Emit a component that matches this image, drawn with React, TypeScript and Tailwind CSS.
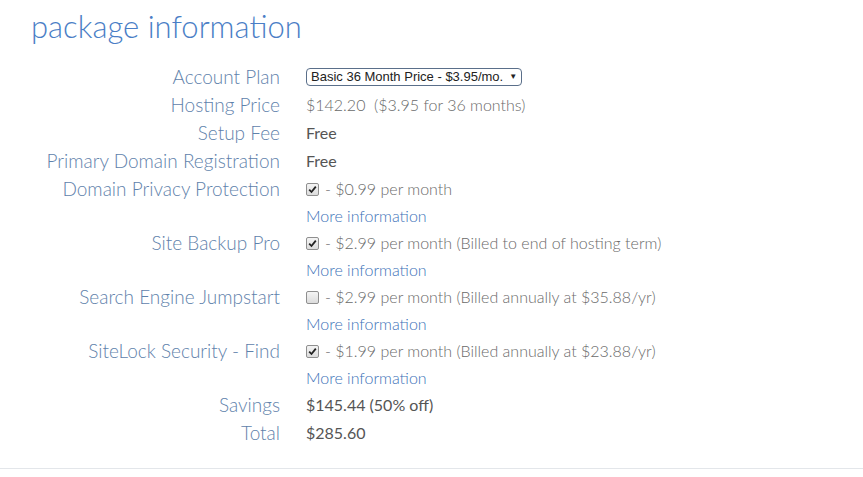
import React from 'react';

const Check = ({ checked }: { checked: boolean }) => (
  <span className="inline-flex h-[13px] w-[13px] items-center justify-center rounded-[2px] border border-[#8f8f8f] bg-gradient-to-b from-[#f4f4f4] to-[#dcdcdc] mr-[6px]">
    {checked && (
      <svg width="9" height="9" viewBox="0 0 9 9">
        <path d="M1.2 4.6 L3.5 7 L7.8 1.6" stroke="#222" strokeWidth="1.8" fill="none" />
      </svg>
    )}
  </span>
);

const Row = ({ label, children, h = 'h-[28px]' }: { label?: string; children: React.ReactNode; h?: string }) => (
  <div className={`flex items-center ${h}`}>
    <div className="w-[280px] shrink-0 text-right text-[19px] text-[#5f82ab]">{label}</div>
    <div className="pl-[26px] text-[16px] text-[#6a6a6a] flex items-center">{children}</div>
  </div>
);

const More = () => (
  <Row h="h-[26px]">
    <span className="text-[#3d72b8] text-[16px]">More information</span>
  </Row>
);

const App = () => {
  return (
    <div className="w-[863px] h-[477px] bg-white font-['Lato',sans-serif] font-light flex flex-col">
      <h1 className="pl-[31px] pt-[6px] text-[31px] leading-[40px] text-[#4a7ec6] font-light">package information</h1>
      <div className="mt-[17px] flex flex-col">
        <Row label="Account Plan">
          <span className="inline-flex items-center h-[18px] rounded-[4px] border border-[#5a6f8a] px-[4px] font-['Liberation_Sans',sans-serif] font-normal text-[13px] text-[#222]">
            Basic 36 Month Price - $3.95/mo.
            <span className="ml-[6px] text-[8px]">▼</span>
          </span>
        </Row>
        <Row label="Hosting Price">$142.20&nbsp;&nbsp;($3.95 for 36 months)</Row>
        <Row label="Setup Fee"><span className="font-normal text-[#555]">Free</span></Row>
        <Row label="Primary Domain Registration"><span className="font-normal text-[#555]">Free</span></Row>
        <Row label="Domain Privacy Protection"><Check checked />- $0.99 per month</Row>
        <More />
        <Row label="Site Backup Pro"><Check checked />- $2.99 per month (Billed to end of hosting term)</Row>
        <More />
        <Row label="Search Engine Jumpstart"><Check checked={false} />- $2.99 per month (Billed annually at $35.88/yr)</Row>
        <More />
        <Row label="SiteLock Security - Find"><Check checked />- $1.99 per month (Billed annually at $23.88/yr)</Row>
        <More />
        <Row label="Savings"><span className="font-normal text-[#555] text-[16px]">$145.44 (50% off)</span></Row>
        <Row label="Total"><span className="font-normal text-[#555] text-[16px]">$285.60</span></Row>
      </div>
      <div className="mt-auto mb-[8px] border-t border-[#e3e6ea]" />
    </div>
  );
};

export default App;
